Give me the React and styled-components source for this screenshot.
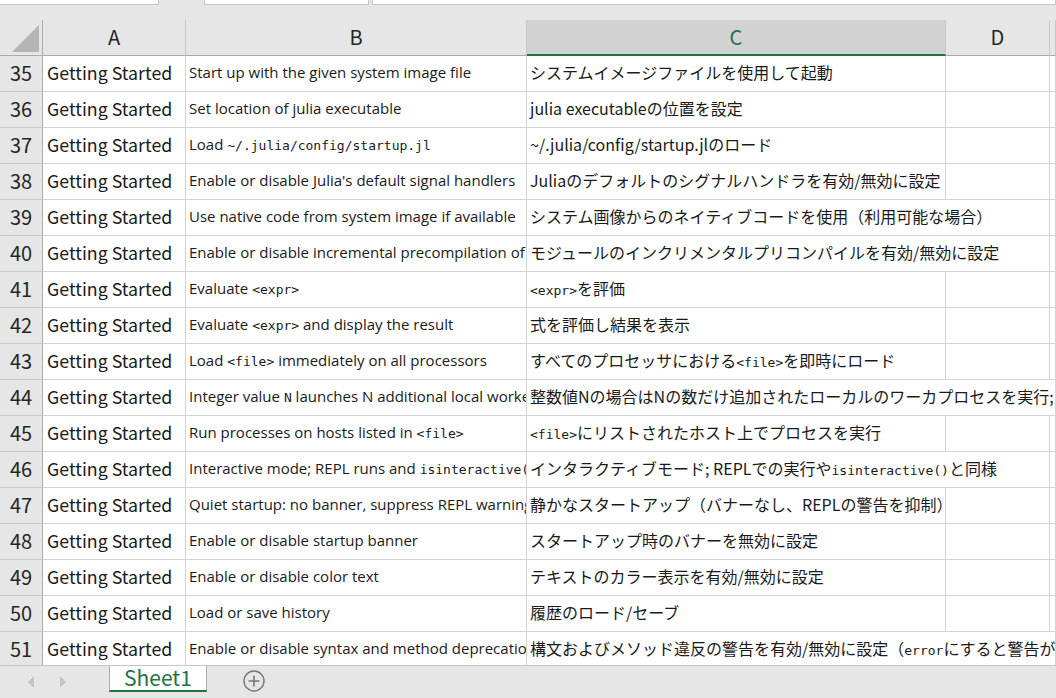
import React from 'react';
import styled, { createGlobalStyle } from 'styled-components';

// スプレッドシート画面 <--
const GlobalStyle = createGlobalStyle`
  html, body {
    margin: 0;
    padding: 0;
    background: #e6e6e6;
    overflow: hidden;
  }
`;

const Page = styled.div`
  width: 1056px;
  height: 698px;
  display: flex;
  flex-direction: column;
  background: #e6e6e6;
  font-family: "Noto Sans CJK JP", sans-serif;
  color: #1a1a1a;
  overflow: hidden;
`;

const TopStrip = styled.div`
  display: flex;
  height: 20px;
  flex-shrink: 0;
`;

const TopBox = styled.div`
  height: 4px;
  background: #fff;
  border: 1px solid #c6c6c6;
  border-top: none;
  box-sizing: content-box;
  margin-left: ${(p) => p.$ml || 0}px;
  width: ${(p) => (p.$w ? `${p.$w}px` : 'auto')};
  flex: ${(p) => (p.$w ? '0 0 auto' : '1')};
  border-left: ${(p) => (p.$ml ? '1px solid #c6c6c6' : 'none')};
`;

const Sheet = styled.div`
  height: 645px;
  flex-shrink: 0;
  overflow: hidden;
`;

const Row = styled.div`
  display: grid;
  grid-template-columns: 43px 143px 341px 419px 104px 1fr;
  height: 36px;
  background: ${(p) => (p.$head ? '#e6e6e6' : '#fff')};
`;

const Corner = styled.div`
  box-sizing: border-box;
  border-right: 1px solid #ababab;
  border-bottom: 1px solid #ababab;
  display: flex;
  align-items: flex-end;
  justify-content: flex-end;
  padding: 0 2px 2px 0;
`;

const ColHead = styled.div`
  box-sizing: border-box;
  display: flex;
  align-items: center;
  justify-content: center;
  font-size: 20px;
  color: ${(p) => (p.$sel ? '#217346' : '#262626')};
  background: ${(p) => (p.$sel ? '#d2d2d2' : 'transparent')};
  border-right: 1px solid #c8c8c8;
  border-bottom: ${(p) => (p.$sel ? '2px solid #217346' : '1px solid #ababab')};
  padding-bottom: ${(p) => (p.$sel ? 2 : 3)}px;
`;

const RowHead = styled.div`
  box-sizing: border-box;
  background: #e6e6e6;
  border-right: 1px solid #ababab;
  border-bottom: 1px solid #c8c8c8;
  display: flex;
  align-items: center;
  justify-content: center;
  font-size: 20px;
  color: #262626;
  padding-bottom: 3px;
`;

const Cell = styled.div`
  position: relative;
  box-sizing: border-box;
  border-right: ${(p) => (p.$noLine ? 'none' : '1px solid #d4d4d4')};
  border-bottom: 1px solid #d4d4d4;
  display: flex;
  align-items: center;
  white-space: nowrap;
  overflow: ${(p) => (p.$spill ? 'visible' : 'hidden')};
  z-index: ${(p) => (p.$spill ? 1 : 0)};
  padding-left: ${(p) => p.$pad || 3}px;
  padding-bottom: 3px;
`;

const CatText = styled.span`
  font-family: "Noto Sans CJK JP", sans-serif;
  font-size: 17.8px;
  color: #1a1a1a;
`;

const DescText = styled.span`
  font-family: "Open Sans", "Noto Sans CJK JP", sans-serif;
  font-size: 15px;
  color: #1a1a1a;
`;

const JaText = styled.span`
  font-family: "Noto Sans CJK JP", sans-serif;
  font-size: 16px;
  color: #1a1a1a;
`;

const Code = styled.span`
  font-family: "DejaVu Sans Mono", monospace;
  font-size: 13px;
`;

const TabBar = styled.div`
  height: 32px;
  flex-shrink: 0;
  border-top: 1px solid #c6c6c6;
  display: flex;
  align-items: stretch;
  background: #e6e6e6;
`;

const NavArrows = styled.div`
  width: 109px;
  display: flex;
  align-items: center;
  padding-left: 27px;
  gap: 24px;
  box-sizing: border-box;
`;

const Tab = styled.div`
  width: 98px;
  height: 26px;
  box-sizing: border-box;
  background: #fff;
  border-left: 1px solid #ababab;
  border-right: 1px solid #ababab;
  border-bottom: 2px solid #217346;
  display: flex;
  align-items: center;
  justify-content: center;
  font-size: 21px;
  color: #217346;
  padding-bottom: 2px;
`;

const AddSheet = styled.div`
  margin-left: 35px;
  display: flex;
  align-items: center;
  padding-bottom: 2px;
`;
// -->

const rows = [
  [35, 'Start up with the given system image file', 'システムイメージファイルを使用して起動', 0],
  [36, 'Set location of julia executable', 'julia executableの位置を設定', 0],
  [37, 'Load `~/.julia/config/startup.jl`', '~/.julia/config/startup.jlのロード', 0],
  [38, "Enable or disable Julia's default signal handlers", 'Juliaのデフォルトのシグナルハンドラを有効/無効に設定', 0],
  [39, 'Use native code from system image if available', 'システム画像からのネイティブコードを使用（利用可能な場合）', 1],
  [40, 'Enable or disable incremental precompilation of modules', 'モジュールのインクリメンタルプリコンパイルを有効/無効に設定', 1],
  [41, 'Evaluate `<expr>`', '`<expr>`を評価', 0],
  [42, 'Evaluate `<expr>` and display the result', '式を評価し結果を表示', 0],
  [43, 'Load `<file>` immediately on all processors', 'すべてのプロセッサにおける`<file>`を即時にロード', 0],
  [44, 'Integer value `N` launches N additional local worker processes', '整数値Nの場合はNの数だけ追加されたローカルのワーカプロセスを実行;', 2],
  [45, 'Run processes on hosts listed in `<file>`', '`<file>`にリストされたホスト上でプロセスを実行', 0],
  [46, 'Interactive mode; REPL runs and `isinteractive()` is true', 'インタラクティブモード; REPLでの実行や`isinteractive()`と同様', 1],
  [47, 'Quiet startup: no banner, suppress REPL warnings', '静かなスタートアップ（バナーなし、REPLの警告を抑制）', 0],
  [48, 'Enable or disable startup banner', 'スタートアップ時のバナーを無効に設定', 0],
  [49, 'Enable or disable color text', 'テキストのカラー表示を有効/無効に設定', 0],
  [50, 'Load or save history', '履歴のロード/セーブ', 0],
  [51, 'Enable or disable syntax and method deprecation warnings', '構文およびメソッド違反の警告を有効/無効に設定（`error`にすると警告が', 2],
];

// `...` で囲んだ部分を等幅にする
const withCode = (text) =>
  text.split('`').map((part, i) => (i % 2 ? <Code key={i}>{part}</Code> : part));

const ArrowLeft = () => (
  <svg width="8" height="12" viewBox="0 0 8 12">
    <path d="M7 0 L1 6 L7 12 Z" fill="#c4c4c4" />
  </svg>
);

const ArrowRight = () => (
  <svg width="8" height="12" viewBox="0 0 8 12">
    <path d="M1 0 L7 6 L1 12 Z" fill="#c4c4c4" />
  </svg>
);

const PlusCircle = () => (
  <svg width="24" height="24" viewBox="0 0 24 24">
    <circle cx="12" cy="12" r="10" fill="none" stroke="#777" strokeWidth="1.4" />
    <path d="M12 6.5 V17.5 M6.5 12 H17.5" stroke="#777" strokeWidth="1.6" />
  </svg>
);

const App = () => {
  return (
    <Page>
      <GlobalStyle />
      <TopStrip>
        <TopBox $w={158} />
        <TopBox $w={163} $ml={45} />
        <TopBox $ml={3} />
      </TopStrip>
      <Sheet>
        <Row $head>
          <Corner>
            <svg width="28" height="28" viewBox="0 0 28 28">
              <path d="M0 27 L27 27 L27 0 Z" fill="#b4b4b4" />
            </svg>
          </Corner>
          <ColHead>A</ColHead>
          <ColHead>B</ColHead>
          <ColHead $sel>C</ColHead>
          <ColHead>D</ColHead>
          <ColHead />
        </Row>
        {rows.map(([num, desc, ja, spill]) => (
          <Row key={num}>
            <RowHead>{num}</RowHead>
            <Cell $pad={4}>
              <CatText>Getting Started</CatText>
            </Cell>
            <Cell>
              <DescText>{withCode(desc)}</DescText>
            </Cell>
            <Cell $spill={spill > 0} $noLine={spill > 0}>
              <JaText>{withCode(ja)}</JaText>
            </Cell>
            <Cell $noLine={spill > 1} />
            <Cell />
          </Row>
        ))}
      </Sheet>
      <TabBar>
        <NavArrows>
          <ArrowLeft />
          <ArrowRight />
        </NavArrows>
        <Tab>Sheet1</Tab>
        <AddSheet>
          <PlusCircle />
        </AddSheet>
      </TabBar>
    </Page>
  );
};

export default App;
